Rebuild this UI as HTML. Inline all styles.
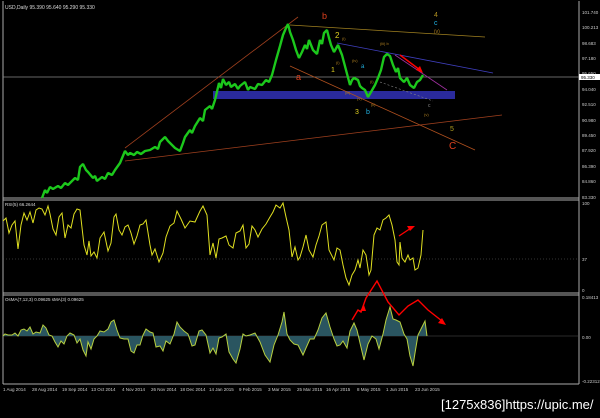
<!DOCTYPE html><html><head><style>
body{margin:0;background:#000;width:600px;height:413px;overflow:hidden;font-family:"Liberation Sans",sans-serif}
svg text{font-family:"Liberation Sans",sans-serif}
</style></head><body>
<svg width="600" height="413" xmlns="http://www.w3.org/2000/svg">
<rect width="600" height="413" fill="#000"/>
<line x1="3" y1="1" x2="3" y2="384" stroke="#aaa" stroke-width="1"/>
<line x1="579" y1="1" x2="579" y2="384" stroke="#aaa" stroke-width="1"/>
<line x1="3" y1="198" x2="579" y2="198" stroke="#aaa"/>
<line x1="3" y1="200" x2="579" y2="200" stroke="#aaa"/>
<line x1="3" y1="293" x2="579" y2="293" stroke="#aaa"/>
<line x1="3" y1="295" x2="579" y2="295" stroke="#aaa"/>
<line x1="3" y1="384" x2="579" y2="384" stroke="#aaa"/>
<text x="5" y="9" fill="#ddd" font-size="5">USD,Daily  95.390 95.640 95.290 95.330</text>
<g fill="#ccc" font-size="4.5">
<text x="582" y="14">101.740</text><text x="582" y="29">100.213</text><text x="582" y="45">98.683</text><text x="582" y="60">97.180</text><text x="582" y="75">95.650</text><text x="582" y="91">94.040</text><text x="582" y="106">92.510</text><text x="582" y="122">90.980</text><text x="582" y="137">89.450</text><text x="582" y="152">87.920</text><text x="582" y="168">86.390</text><text x="582" y="183">84.860</text><text x="582" y="199">83.330</text>
</g>
<rect x="579" y="74" width="21" height="6" fill="#fff"/>
<text x="581" y="79" font-size="4.5" fill="#000">95.330</text>
<line x1="3" y1="77" x2="579" y2="77" stroke="#888" stroke-width="0.8"/>
<rect x="213" y="91" width="242" height="8" fill="#2a2a9c"/>
<line x1="125" y1="148" x2="298" y2="17" stroke="#a0401e" stroke-width="0.8"/>
<line x1="125" y1="161" x2="502" y2="115" stroke="#a0401e" stroke-width="0.8"/>
<line x1="290" y1="25" x2="485" y2="37" stroke="#a08020" stroke-width="0.8"/>
<line x1="290" y1="66" x2="475" y2="150" stroke="#b0501e" stroke-width="0.8"/>
<line x1="337" y1="43" x2="493" y2="73" stroke="#4040c0" stroke-width="0.8"/>
<line x1="395" y1="55" x2="447" y2="90" stroke="#a030a0" stroke-width="0.8"/>
<line x1="380" y1="82" x2="433" y2="101" stroke="#888" stroke-width="0.6" stroke-dasharray="2,2"/>
<line x1="400" y1="55" x2="420" y2="70" stroke="#f00" stroke-width="1.5"/>
<polygon points="423,73 416,70 420,66" fill="#f00"/>
<polyline fill="none" stroke="#1cc81c" stroke-width="2.4" stroke-linejoin="bevel" points="42,198 45,190 47,193 50,187 53,189 58,186 61,188 65,183 68,185 75,178 78,180 80,167 83,164 86,170 88,172 93,178 95,176 97,181 102,177 105,179 108,173 112,175 115,170 120,163 125,151 128,155 130,153 134,155 137,152 141,154 145,151 150,150 155,147 158,149 160,142 165,137 168,141 170,143 175,148 180,151 183,143 185,137 190,130 192,133 195,126 200,118 203,121 205,110 210,106 212,109 215,100 219,83 221,88 223,79 226,85 229,82 231,87 235,84 238,89 240,86 245,82 248,90 250,87 255,89 258,84 262,85 266,80 269,82 272,75 276,60 280,46 283,35 286,28 288,24 290,32 293,40 296,50 299,58 302,52 305,45 307,49 309,40 313,50 317,54 320,40 322,44 324,33 327,30 329,38 331,45 334,52 338,45 342,55 346,70 350,85 352,80 354,78 358,80 360,86 362,88 365,90 368,97 371,92 375,85 378,78 381,70 384,57 387,54 390,56 393,65 396,72 398,68 400,78 404,82 407,78 410,85 414,88 417,82 420,80 423,75"/>
<g font-size="9">
<text x="322" y="19" fill="#e0401e">b</text>
<text x="296" y="80" fill="#e0401e">a</text>
<text x="449" y="149" fill="#e0401e" font-size="10">C</text>
<text x="434" y="17" fill="#b09020" font-size="7">4</text>
<text x="434" y="25" fill="#20b0e0" font-size="7">c</text>
<text x="434" y="33" fill="#b08020" font-size="5">(v)</text>
<text x="335" y="38" fill="#e0d020" font-size="8">2</text>
<text x="331" y="72" fill="#e0d020" font-size="7">1</text>
<text x="355" y="114" fill="#e0d020" font-size="7">3</text>
<text x="366" y="114" fill="#20b0e0" font-size="7">b</text>
<text x="361" y="68" fill="#20b0e0" font-size="6">a</text>
<text x="450" y="131" fill="#b0a020" font-size="7">5</text>
<text x="428" y="107" fill="#888" font-size="5">c</text>
<text x="424" y="116" fill="#b08020" font-size="4">(v)</text>
<text x="342" y="40" fill="#b08020" font-size="4">(i)</text>
<text x="380" y="45" fill="#b08020" font-size="4">(iii) b</text>
<text x="352" y="62" fill="#b08020" font-size="4">(iv)</text>
<text x="336" y="64" fill="#b08020" font-size="4">(i)</text>
<text x="370" y="83" fill="#b08020" font-size="4">(i)</text>
<text x="345" y="94" fill="#b08020" font-size="4">(iii)</text>
<text x="357" y="100" fill="#b08020" font-size="4">(v)</text>
<text x="371" y="106" fill="#b08020" font-size="4">(ii)</text>
</g>
<text x="5" y="206" fill="#ddd" font-size="4.5">RSI(5) 66.2644</text>
<g fill="#ccc" font-size="4.5"><text x="582" y="205">100</text><text x="582" y="261">37</text><text x="582" y="292">0</text></g>
<line x1="3" y1="259" x2="579" y2="259" stroke="#666" stroke-width="0.6" stroke-dasharray="1,2"/>
<polyline fill="none" stroke="#e0e020" stroke-width="1" points="3,221 6,218 9,233 12,225 15,221 18,249 21,225 24,213 27,220 30,212 33,223 36,210 39,208 42,209 45,215 48,206 50,214 53,229 56,235 59,217 62,213 65,238 68,225 71,228 74,214 77,209 80,210 84,245 87,255 89,241 91,256 94,252 97,258 100,238 104,232 108,251 111,243 114,217 116,214 119,230 122,235 125,227 128,225 131,233 134,244 137,236 140,225 143,224 146,220 150,245 152,255 155,249 159,262 163,253 166,237 170,226 174,223 177,211 181,219 185,228 190,221 195,222 200,211 203,206 207,215 210,255 213,243 216,258 219,239 222,238 226,236 229,245 233,248 236,233 240,231 243,225 246,248 249,244 252,226 255,230 258,237 262,229 266,224 270,217 273,212 276,205 280,208 283,203 286,217 289,230 292,257 295,247 298,260 300,257 303,247 306,235 309,250 313,257 316,245 319,236 322,225 326,222 329,250 334,260 337,248 340,250 343,265 346,278 349,285 352,275 355,270 358,260 360,268 363,250 366,255 369,275 371,270 374,235 377,228 380,230 383,220 386,218 389,215 392,225 395,240 397,262 399,265 400,242 402,258 405,262 408,255 410,260 413,258 415,270 418,268 421,255 423,230"/>
<line x1="399" y1="236" x2="411" y2="228" stroke="#f00" stroke-width="1.3"/>
<polygon points="415,226 407,226 410,231" fill="#f00"/>
<text x="5" y="301" fill="#ddd" font-size="4.5">OsMA(7,12,3) 0.09625  sMA(3) 0.09625</text>
<g fill="#ccc" font-size="4.5"><text x="582" y="299">0.18413</text><text x="582" y="339">0.00</text><text x="582" y="383">-0.22312</text></g>
<line x1="3" y1="336" x2="579" y2="336" stroke="#555" stroke-width="0.6"/>
<polygon fill="#2a5560" points="3,336 5,334 8,335 12,335 15,333 18,336 21,330 24,329 27,331 30,327 33,334 36,332 40,333 43,325 46,328 49,335 52,336 55,342 58,347 61,341 64,344 67,336 70,333 74,335 77,343 80,339 83,350 86,356 88,342 91,349 94,339 97,336 100,331 104,332 108,329 111,322 114,320 117,330 120,338 124,339 128,339 131,351 134,353 137,345 140,345 143,335 146,329 150,332 153,333 156,347 160,346 163,351 166,341 170,344 174,334 177,322 180,327 184,331 188,334 192,346 195,345 199,331 202,330 206,335 210,353 213,348 216,354 219,338 222,337 226,334 229,352 233,359 236,363 240,349 243,334 246,336 250,335 255,333 260,342 265,355 270,362 274,345 278,335 282,322 284,312 287,334 290,340 294,344 298,345 303,355 306,348 310,339 314,339 318,330 322,318 326,313 330,327 334,339 337,346 340,345 343,341 347,348 350,331 354,323 357,330 360,343 364,360 368,344 372,336 376,339 379,349 383,334 386,320 390,307 393,319 396,320 400,322 404,334 407,339 410,356 413,366 415,353 418,335 422,327 425,321 427,336"/>
<polyline fill="none" stroke="#b8d040" stroke-width="1" points="3,336 5,334 8,335 12,335 15,333 18,336 21,330 24,329 27,331 30,327 33,334 36,332 40,333 43,325 46,328 49,335 52,336 55,342 58,347 61,341 64,344 67,336 70,333 74,335 77,343 80,339 83,350 86,356 88,342 91,349 94,339 97,336 100,331 104,332 108,329 111,322 114,320 117,330 120,338 124,339 128,339 131,351 134,353 137,345 140,345 143,335 146,329 150,332 153,333 156,347 160,346 163,351 166,341 170,344 174,334 177,322 180,327 184,331 188,334 192,346 195,345 199,331 202,330 206,335 210,353 213,348 216,354 219,338 222,337 226,334 229,352 233,359 236,363 240,349 243,334 246,336 250,335 255,333 260,342 265,355 270,362 274,345 278,335 282,322 284,312 287,334 290,340 294,344 298,345 303,355 306,348 310,339 314,339 318,330 322,318 326,313 330,327 334,339 337,346 340,345 343,341 347,348 350,331 354,323 357,330 360,343 364,360 368,344 372,336 376,339 379,349 383,334 386,320 390,307 393,319 396,320 400,322 404,334 407,339 410,356 413,366 415,353 418,335 422,327 425,321 427,336"/>
<polyline fill="none" stroke="#f00" stroke-width="1.4" points="352,320 358,310 361,312 366,298 377,281 388,302 399,315 408,306 418,300 428,310 442,321"/>
<polygon points="446,325 438,323 442,318" fill="#f00"/>
<polygon points="364,305 360,311 366,311" fill="#f00"/>
<g fill="#ccc" font-size="4.5">
<text x="3" y="391">1 Aug 2014</text><text x="32" y="391">28 Aug 2014</text><text x="62" y="391">19 Sep 2014</text><text x="91" y="391">13 Oct 2014</text><text x="122" y="391">4 Nov 2014</text><text x="151" y="391">26 Nov 2014</text><text x="180" y="391">18 Dec 2014</text><text x="209" y="391">14 Jan 2015</text><text x="239" y="391">9 Feb 2015</text><text x="268" y="391">3 Mar 2015</text><text x="297" y="391">25 Mar 2015</text><text x="326" y="391">16 Apr 2015</text><text x="357" y="391">8 May 2015</text><text x="386" y="391">1 Jun 2015</text><text x="415" y="391">23 Jun 2015</text>
</g>
<text x="441" y="409" fill="#fff" font-size="13">[1275x836]https://upic.me/</text>
</svg>
</body></html>
